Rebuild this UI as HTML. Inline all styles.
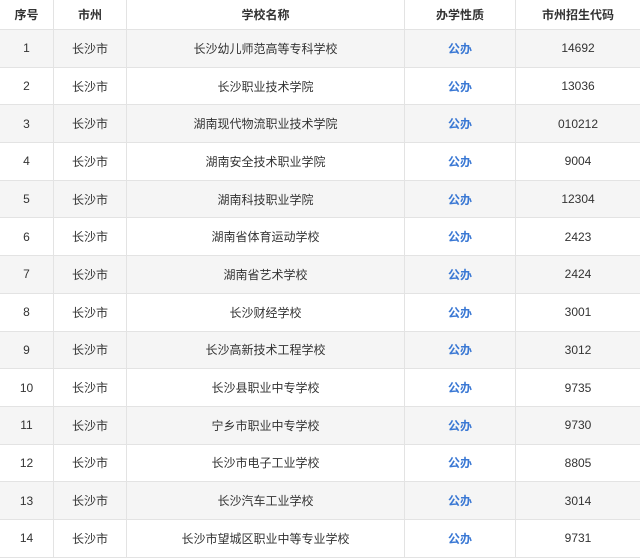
<!DOCTYPE html>
<html><head><meta charset="utf-8"><style>
html,body{margin:0;padding:0;background:#fff;width:640px;height:560px;overflow:hidden}
table{border-collapse:collapse;table-layout:fixed;width:641px;font-family:"Liberation Sans","Noto Sans CJK SC",sans-serif;font-size:12px;color:#333}
td,th{border:1px solid #e3e3e3;text-align:center;padding:0;height:36.7px}
th{height:29px;font-weight:bold;color:#333;background:#fff}
tbody tr:nth-child(odd){background:#f5f5f5}
.b{color:#3a78d4;font-weight:bold}
table{margin-left:-1px;margin-top:-1px}
</style></head><body>
<table>
<colgroup><col style="width:54px"><col style="width:73px"><col style="width:278px"><col style="width:111px"><col style="width:125px"></colgroup>
<thead><tr><th>序号</th><th>市州</th><th>学校名称</th><th>办学性质</th><th>市州招生代码</th></tr></thead>
<tbody>
<tr><td>1</td><td>长沙市</td><td>长沙幼儿师范高等专科学校</td><td class="b">公办</td><td>14692</td></tr>
<tr><td>2</td><td>长沙市</td><td>长沙职业技术学院</td><td class="b">公办</td><td>13036</td></tr>
<tr><td>3</td><td>长沙市</td><td>湖南现代物流职业技术学院</td><td class="b">公办</td><td>010212</td></tr>
<tr><td>4</td><td>长沙市</td><td>湖南安全技术职业学院</td><td class="b">公办</td><td>9004</td></tr>
<tr><td>5</td><td>长沙市</td><td>湖南科技职业学院</td><td class="b">公办</td><td>12304</td></tr>
<tr><td>6</td><td>长沙市</td><td>湖南省体育运动学校</td><td class="b">公办</td><td>2423</td></tr>
<tr><td>7</td><td>长沙市</td><td>湖南省艺术学校</td><td class="b">公办</td><td>2424</td></tr>
<tr><td>8</td><td>长沙市</td><td>长沙财经学校</td><td class="b">公办</td><td>3001</td></tr>
<tr><td>9</td><td>长沙市</td><td>长沙高新技术工程学校</td><td class="b">公办</td><td>3012</td></tr>
<tr><td>10</td><td>长沙市</td><td>长沙县职业中专学校</td><td class="b">公办</td><td>9735</td></tr>
<tr><td>11</td><td>长沙市</td><td>宁乡市职业中专学校</td><td class="b">公办</td><td>9730</td></tr>
<tr><td>12</td><td>长沙市</td><td>长沙市电子工业学校</td><td class="b">公办</td><td>8805</td></tr>
<tr><td>13</td><td>长沙市</td><td>长沙汽车工业学校</td><td class="b">公办</td><td>3014</td></tr>
<tr><td>14</td><td>长沙市</td><td>长沙市望城区职业中等专业学校</td><td class="b">公办</td><td>9731</td></tr>
</tbody></table>
</body></html>
